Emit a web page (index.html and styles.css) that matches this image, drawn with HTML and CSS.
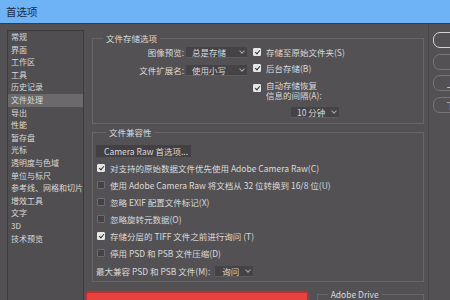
FILE: index.html
```html
<!DOCTYPE html>
<html lang="zh-CN">
<head>
  <meta charset="UTF-8" />
  <title>首选项</title>
  <link rel="stylesheet" href="styles.css">
</head>
<body>

<!-- Title bar -->
<div class="titlebar">首选项</div>

<div class="dialog">

  <!-- Category list -->
  <div class="nav">
    <div class="nav-item">常规</div>
    <div class="nav-item">界面</div>
    <div class="nav-item">工作区</div>
    <div class="nav-item">工具</div>
    <div class="nav-item">历史记录</div>
    <div class="nav-item active">文件处理</div>
    <div class="nav-item">导出</div>
    <div class="nav-item">性能</div>
    <div class="nav-item">暂存盘</div>
    <div class="nav-item">光标</div>
    <div class="nav-item">透明度与色域</div>
    <div class="nav-item">单位与标尺</div>
    <div class="nav-item">参考线、网格和切片</div>
    <div class="nav-item">增效工具</div>
    <div class="nav-item">文字</div>
    <div class="nav-item">3D</div>
    <div class="nav-item">技术预览</div>
  </div>

  <div class="main">

    <!-- File saving options -->
    <fieldset class="group store">
      <legend>文件存储选项</legend>
      <div class="store-cols">
        <div class="store-left">
          <div class="field-row">
            <span class="field-label">图像预览:</span>
            <span class="select wide">总是存储<i class="chev"></i></span>
          </div>
          <div class="field-row">
            <span class="field-label">文件扩展名:</span>
            <span class="select wide">使用小写<i class="chev"></i></span>
          </div>
        </div>
        <div class="store-right">
          <div class="check-row"><span class="box on"></span>存储至原始文件夹(S)</div>
          <div class="check-row second"><span class="box on"></span>后台存储(B)</div>
          <div class="check-row multi"><span class="box on"></span><span>自动存储恢复<br>信息的间隔(A):</span></div>
          <span class="select interval">10 分钟<i class="chev"></i></span>
        </div>
      </div>
    </fieldset>

    <!-- File compatibility -->
    <fieldset class="group compat">
      <legend>文件兼容性</legend>
      <div class="raw-btn">Camera Raw 首选项...</div>
      <div class="check-row"><span class="box on"></span>对支持的原始数据文件优先使用 Adobe Camera Raw(C)</div>
      <div class="check-row"><span class="box"></span>使用 Adobe Camera Raw 将文档从 32 位转换到 16/8 位(U)</div>
      <div class="check-row"><span class="box"></span>忽略 EXIF 配置文件标记(X)</div>
      <div class="check-row"><span class="box"></span>忽略旋转元数据(O)</div>
      <div class="check-row"><span class="box on"></span>存储分层的 TIFF 文件之前进行询问 (T)</div>
      <div class="check-row"><span class="box"></span>停用 PSD 和 PSB 文件压缩(D)</div>
      <div class="field-row max-compat">
        最大兼容 PSD 和 PSB 文件(M):
        <span class="select ask">询问<i class="chev"></i></span>
      </div>
    </fieldset>

    <div class="bottom-row">
      <div class="red-mark"></div>
      <fieldset class="group drive">
        <legend>Adobe Drive</legend>
      </fieldset>
    </div>

  </div>

  <!-- Dialog buttons -->
  <div class="buttons">
    <div class="btn default">确定</div>
    <div class="btn">取消</div>
    <div class="btn">上一个(P)</div>
    <div class="btn">下一个(N)</div>
  </div>

</div>

</body>
</html>
```

FILE: styles.css
```css
body {
  margin: 0;
  width: 450px;
  height: 300px;
  overflow: hidden;
  background: #535153;
  color: #dadada;
  font-family: "Noto Sans CJK SC", "Noto Sans", sans-serif;
  font-size: 8.5px;
}

.titlebar {
  box-sizing: border-box;
  height: 24px;
  background: #6db3f5;
  border-bottom: 1px solid #3e3c3e;
  color: #1c2b46;
  font-size: 10.5px;
  display: flex;
  align-items: center;
  padding-left: 6px;
}

.dialog {
  display: flex;
  padding-top: 8px;
}

/* left list */
.nav {
  width: 76px;
  height: 300px;
  margin-left: 7px;
  margin-top: -2px;
  border: 1px solid #3d3b3d;
  background: #504e50;
  font-size: 8px;
}

.nav-item {
  line-height: 12.6px;
  height: 12.6px;
  padding-left: 3px;
  white-space: nowrap;
}

.nav-item.active {
  background: #6b696b;
}

.main {
  width: 332px;
  margin-left: 8px;
}

/* group boxes */
.group {
  margin: 0;
  border: 1px solid #676567;
  padding: 0 0 0 0;
  min-width: 0;
}

.group legend {
  margin-left: 10px;
  padding: 0 3px;
  line-height: 12px;
  font-size: 8.5px;
}

.store {
  padding: 2px 0 5px 0;
}

.store-cols {
  display: flex;
}

.store-left {
  display: flex;
  flex-direction: column;
  gap: 6px;
}

.field-row {
  display: flex;
  align-items: center;
  height: 12px;
  white-space: nowrap;
}

.field-label {
  width: 91px;
  text-align: right;
  margin-right: 2px;
}

.select {
  box-sizing: border-box;
  display: inline-flex;
  align-items: center;
  justify-content: space-between;
  height: 11px;
  padding: 0 3px 0 6px;
  background: #454345;
  border-bottom: 1px solid #5e5c5e;
}

.select.wide { width: 61px; }
.select.interval { width: 48px; margin: 7px 0 0 38px; }
.select.ask { width: 38px; margin-left: 5px; padding-left: 7px; }

.chev {
  width: 3px;
  height: 3px;
  border-right: 1px solid #a9a7a9;
  border-bottom: 1px solid #a9a7a9;
  transform: rotate(45deg);
  margin-top: -2px;
}

.store-right {
  margin-left: 6px;
}

.check-row {
  display: flex;
  align-items: center;
  height: 12px;
  white-space: nowrap;
}

.check-row.second { margin-top: 4px; }

.check-row.multi {
  align-items: flex-start;
  height: auto;
  margin-top: 7px;
  line-height: 9.5px;
}

.check-row.multi .box { margin-top: 3px; }

.box {
  box-sizing: border-box;
  width: 8px;
  height: 8px;
  margin-right: 5px;
  flex-shrink: 0;
  border: 1px solid #6e6c6e;
  background: #444244;
  border-radius: 1px;
  position: relative;
}

.box.on {
  background: #e6e6e6;
  border-color: #e6e6e6;
}

.box.on::after {
  content: "";
  position: absolute;
  left: 1.5px;
  top: 0;
  width: 2px;
  height: 4px;
  border-right: 1.5px solid #333;
  border-bottom: 1.5px solid #333;
  transform: rotate(40deg);
}

/* compatibility group */
.compat {
  margin-top: 2px;
  padding: 7px 0 4px 3px;
}

.raw-btn {
  width: 87px;
  height: 12px;
  line-height: 12px;
  padding-left: 8px;
  background: #424042;
  white-space: nowrap;
}

.compat .check-row {
  margin-top: 5px;
  margin-left: 1px;
}

.field-row.max-compat {
  margin-top: 6px;
}

/* bottom strip */
.bottom-row {
  display: flex;
  align-items: flex-start;
  margin-top: 6px;
}

.red-mark {
  width: 221px;
  height: 14px;
  margin: 4px 0 0 -6px;
  background: #e8413f;
  border: 1px solid #c22b2b;
  border-radius: 2px;
  box-shadow: 0 0 3px rgba(230, 60, 60, 0.8);
}

.drive {
  width: 106px;
  height: 30px;
  margin-left: 9px;
}

/* right buttons */
.buttons {
  margin-left: 4px;
  margin-top: -8px;
  padding: 8px 0 0 4px;
  border-left: 1px solid #474547;
  height: 300px;
}

.btn {
  box-sizing: border-box;
  width: 64px;
  height: 16px;
  line-height: 14px;
  margin-bottom: 5.5px;
  border: 1px solid #777577;
  border-radius: 7px;
  text-align: center;
  white-space: nowrap;
}

.btn.default {
  border-color: #d4d4d4;
}
```
